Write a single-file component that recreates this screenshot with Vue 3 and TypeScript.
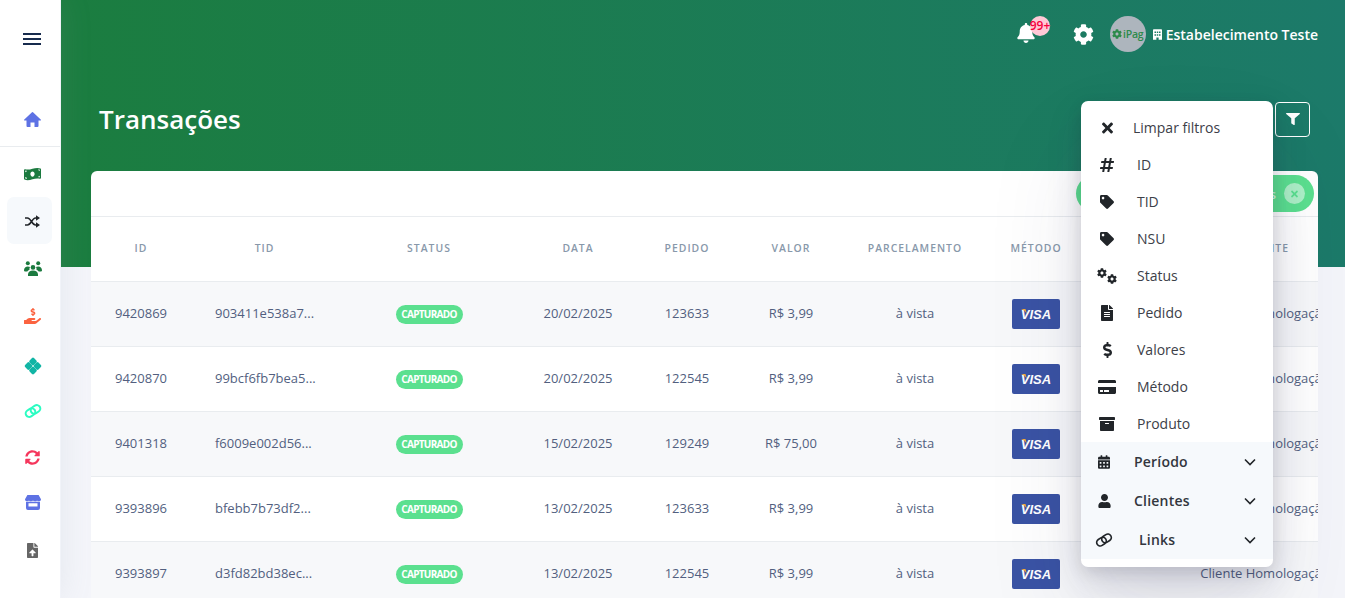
<script setup lang="ts">
type Row = { id: string; tid: string; date: string; order: string; value: string }
type MenuItem = { label: string; icon: string; box: string; width: number }

const icons = {
  money: 'M621.16 54.46C582.37 38.19 543.55 32 504.75 32c-123.17-.01-246.33 62.34-369.5 62.34-30.89 0-61.76-3.92-92.65-13.72-3.47-1.1-6.95-1.62-10.35-1.62C15.04 79 0 92.32 0 110.81v317.26c0 12.63 7.23 24.6 18.84 29.46C57.63 473.81 96.45 480 135.25 480c123.17 0 246.34-62.35 369.51-62.35 30.89 0 61.76 3.92 92.65 13.72 3.47 1.1 6.95 1.62 10.35 1.62 17.21 0 32.25-13.32 32.25-31.81V83.93c-.01-12.64-7.24-24.6-18.85-29.47zM48 132.22c20.12 5.04 41.12 7.57 62.72 8.93C104.84 170.54 79 192.69 48 192.69v-60.47zm0 285.2v-47.78c34.37 0 62.18 27.27 63.71 61.4-22.53-1.81-43.59-6.31-63.71-13.62zM320 352c-44.19 0-80-42.99-80-96 0-53.02 35.82-96 80-96s80 42.98 80 96c0 53.03-35.83 96-80 96zm272 27.78c-17.52-4.39-35.71-6.85-54.32-8.44 5.87-26.08 27.5-45.88 54.32-49.28v57.72zm0-236.11c-30.89-3.91-54.86-29.7-55.81-61.55 19.54 2.17 38.09 6.23 55.81 12.66v48.89z',
  hand: 'M271.06,144.3l54.27,14.3a8.59,8.59,0,0,1,6.63,8.1c0,4.6-4.09,8.4-9.12,8.4h-35.6a30,30,0,0,1-11.19-2.2c-5.24-2.2-11.28-1.7-15.3,2l-19,17.5a11.68,11.68,0,0,0-2.25,2.66,11.42,11.42,0,0,0,3.88,15.74,83.77,83.77,0,0,0,34.51,11.5V240c0,8.8,7.83,16,17.37,16h17.37c9.55,0,17.38-7.2,17.38-16V222.4c32.93-3.6,57.84-31,53.5-63-3.15-23-22.46-41.3-46.56-47.7L282.68,97.4a8.59,8.59,0,0,1-6.63-8.1c0-4.6,4.09-8.4,9.12-8.4h35.6A30,30,0,0,1,332,83.1c5.23,2.2,11.28,1.7,15.3-2l19-17.5A11.31,11.31,0,0,0,368.47,61a11.43,11.43,0,0,0-3.84-15.78,83.82,83.82,0,0,0-34.52-11.5V16c0-8.8-7.82-16-17.37-16H295.37C285.82,0,278,7.2,278,16V33.6c-32.89,3.6-57.85,31-53.51,63C227.63,119.6,247,137.9,271.06,144.3ZM565.27,328.1c-11.8-10.7-30.2-10-42.6,0L430.27,402a63.64,63.64,0,0,1-40,14H272a16,16,0,0,1,0-32h78.29c15.9,0,30.71-10.9,33.25-26.6a31.2,31.2,0,0,0,.46-5.46A32,32,0,0,0,352,320H192a117.66,117.66,0,0,0-74.1,26.29L71.4,384H16A16,16,0,0,0,0,400v96a16,16,0,0,0,16,16H372.77a64,64,0,0,0,40-14L564,377a32,32,0,0,0,1.28-48.9Z',
  sync: 'M370.72 133.28C339.458 104.008 298.888 87.962 255.848 88c-77.458.068-144.328 53.178-162.791 126.85-1.344 5.363-6.122 9.15-11.651 9.15H24.103c-7.498 0-13.194-6.807-11.807-14.176C33.933 94.924 134.813 8 256 8c66.448 0 126.791 26.136 171.315 68.685L463.03 40.97C478.149 25.851 504 36.559 504 57.941V192c0 13.255-10.745 24-24 24H345.941c-21.382 0-32.09-25.851-16.971-40.971l41.75-41.749zM32 296h134.059c21.382 0 32.09 25.851 16.971 40.971l-41.75 41.75c31.262 29.273 71.835 45.319 114.876 45.28 77.418-.07 144.315-53.144 162.787-126.849 1.344-5.363 6.122-9.15 11.651-9.15h57.304c7.498 0 13.194 6.807 11.807 14.176C478.067 417.076 377.187 504 256 504c-66.448 0-126.791-26.136-171.315-68.685L48.97 471.03C33.851 486.149 8 475.441 8 454.059V320c0-13.255 10.745-24 24-24z',
  upload: 'M224 136V0H24C10.7 0 0 10.7 0 24v464c0 13.3 10.7 24 24 24h336c13.3 0 24-10.7 24-24V160H248c-13.2 0-24-10.8-24-24zm65.18 216.01H224v80c0 8.84-7.16 16-16 16h-32c-8.84 0-16-7.16-16-16v-80H94.82c-14.28 0-21.41-17.29-11.27-27.36l96.42-95.7c6.65-6.61 17.39-6.61 24.04 0l96.42 95.7c10.15 10.07 3.03 27.36-11.25 27.36zM377 105L279.1 7c-4.5-4.5-10.6-7-17-7H256v128h128v-6.1c0-6.3-2.5-12.4-7-16.9z',
  bell: 'M224 512c35.32 0 63.97-28.65 63.97-64H160.03c0 35.35 28.65 64 63.97 64zm215.39-149.71c-19.32-20.76-55.47-51.99-55.47-154.29 0-77.7-54.48-139.9-127.94-155.16V32c0-17.67-14.32-32-31.98-32s-31.98 14.33-31.98 32v20.84C118.56 68.1 64.08 130.3 64.08 208c0 102.3-36.15 133.53-55.47 154.29-6 6.45-8.66 14.16-8.61 21.71.11 16.4 12.98 32 32.1 32h383.8c19.12 0 32-15.6 32.1-32 .05-7.55-2.61-15.27-8.61-21.71z',
  cog: 'M487.4 315.7l-42.6-24.6c4.3-23.2 4.3-47 0-70.2l42.6-24.6c4.9-2.8 7.1-8.6 5.5-14-11.1-35.6-30-67.8-54.7-94.6-3.8-4.1-10-5.1-14.8-2.3L380.8 110c-17.9-15.4-38.5-27.3-60.8-35.1V25.8c0-5.6-3.9-10.5-9.4-11.7-36.7-8.2-74.3-7.8-109.2 0-5.5 1.2-9.4 6.1-9.4 11.7V75c-22.2 7.9-42.8 19.8-60.8 35.1L88.7 85.5c-4.9-2.8-11-1.9-14.8 2.3-24.7 26.7-43.6 58.9-54.7 94.6-1.7 5.4.6 11.2 5.5 14L67.3 221c-4.3 23.2-4.3 47 0 70.2l-42.6 24.6c-4.9 2.8-7.1 8.6-5.5 14 11.1 35.6 30 67.8 54.7 94.6 3.8 4.1 10 5.1 14.8 2.3l42.6-24.6c17.9 15.4 38.5 27.3 60.8 35.1v49.2c0 5.6 3.9 10.5 9.4 11.7 36.7 8.2 74.3 7.8 109.2 0 5.5-1.2 9.4-6.1 9.4-11.7v-49.2c22.2-7.9 42.8-19.8 60.8-35.1l42.6 24.6c4.9 2.8 11 1.9 14.8-2.3 24.7-26.7 43.6-58.9 54.7-94.6 1.5-5.5-.7-11.3-5.6-14.1zM256 336c-44.1 0-80-35.9-80-80s35.9-80 80-80 80 35.9 80 80-35.9 80-80 80z',
  filter: 'M487.976 0H24.028C2.71 0-8.047 25.866 7.058 40.971L192 225.941V432c0 7.831 3.821 15.17 10.237 19.662l80 55.98C298.02 518.69 320 507.493 320 487.98V225.941l184.947-184.97C520.021 25.896 509.338 0 487.976 0z',
  times: 'M242.72 256l100.07-100.07c12.28-12.28 12.28-32.19 0-44.48l-22.24-22.24c-12.28-12.28-32.19-12.28-44.48 0L176 189.28 75.93 89.21c-12.28-12.28-32.19-12.28-44.48 0L9.21 111.45c-12.28 12.28-12.28 32.19 0 44.48L109.28 256 9.21 356.07c-12.28 12.28-12.28 32.19 0 44.48l22.24 22.24c12.28 12.28 32.2 12.28 44.48 0L176 322.72l100.07 100.07c12.28 12.28 32.2 12.28 44.48 0l22.24-22.24c12.28-12.28 12.28-32.19 0-44.48L242.72 256z',
  hashtag: 'M440.667 182.109l7.143-40c1.313-7.355-4.342-14.109-11.813-14.109h-74.81l14.623-81.891C377.123 38.754 371.468 32 363.997 32h-40.632a12 12 0 0 0-11.813 9.891L296.175 128H197.54l14.623-81.891C213.477 38.754 207.822 32 200.35 32h-40.632a12 12 0 0 0-11.813 9.891L132.528 128H53.432a12 12 0 0 0-11.813 9.891l-7.143 40C33.163 185.246 38.818 192 46.289 192h74.81L98.242 320H19.146a12 12 0 0 0-11.813 9.891l-7.143 40C-1.123 377.246 4.532 384 12.003 384h74.81L72.19 465.891C70.877 473.246 76.532 480 84.003 480h40.632a12 12 0 0 0 11.813-9.891L151.826 384h98.634l-14.623 81.891C234.523 473.246 240.178 480 247.65 480h40.632a12 12 0 0 0 11.813-9.891L315.472 384h79.096a12 12 0 0 0 11.813-9.891l7.143-40c1.313-7.355-4.342-14.109-11.813-14.109h-74.81l22.857-128h79.096a12 12 0 0 0 11.813-9.891zM261.889 320h-98.634l22.857-128h98.634l-22.857 128z',
  tag: 'M0 252.118V48C0 21.49 21.49 0 48 0h204.118a48 48 0 0 1 33.941 14.059l211.882 211.882c18.745 18.745 18.745 49.137 0 67.882L293.823 497.941c-18.745 18.745-49.137 18.745-67.882 0L14.059 286.059A48 48 0 0 1 0 252.118zM112 64c-26.51 0-48 21.49-48 48s21.49 48 48 48 48-21.49 48-48-21.49-48-48-48z',
  file: 'M224 136V0H24C10.7 0 0 10.7 0 24v464c0 13.3 10.7 24 24 24h336c13.3 0 24-10.7 24-24V160H248c-13.2 0-24-10.8-24-24zm64 236c0 6.6-5.4 12-12 12H108c-6.6 0-12-5.4-12-12v-8c0-6.6 5.4-12 12-12h168c6.6 0 12 5.4 12 12v8zm0-64c0 6.6-5.4 12-12 12H108c-6.6 0-12-5.4-12-12v-8c0-6.6 5.4-12 12-12h168c6.6 0 12 5.4 12 12v8zm0-72v8c0 6.6-5.4 12-12 12H108c-6.6 0-12-5.4-12-12v-8c0-6.6 5.4-12 12-12h168c6.6 0 12 5.4 12 12zm96-114.1v6.1H256V0h6.1c6.4 0 12.5 2.5 17 7l97.9 98c4.5 4.5 7 10.6 7 16.9z',
  dollar: 'M209.2 233.4l-108-31.6C88.7 198.2 80 186.5 80 173.5c0-16.3 13.2-29.5 29.5-29.5h66.3c12.2 0 24.2 3.7 34.2 10.5 6.1 4.1 14.3 3.1 19.5-2l34.8-34c7.1-6.9 6.1-18.4-1.8-24.5C238 74.8 207.4 64.1 176 64V16c0-8.8-7.2-16-16-16h-32c-8.8 0-16 7.2-16 16v48h-2.5C45.8 64-5.4 118.7.5 183.6c4.2 46.1 39.4 83.6 83.8 96.6l102.5 30c12.5 3.7 21.2 15.3 21.2 28.3 0 16.3-13.2 29.5-29.5 29.5h-66.3C100 368 88 364.3 78 357.5c-6.1-4.1-14.3-3.1-19.5 2l-34.8 34c-7.1 6.9-6.1 18.4 1.8 24.5 24.5 19.2 55.1 29.9 86.5 30v48c0 8.8 7.2 16 16 16h32c8.8 0 16-7.2 16-16v-48.2c46.6-.9 90.3-28.6 105.7-72.7 21.5-61.6-14.6-124.8-72.5-141.7z',
  card: 'M0 432c0 26.5 21.5 48 48 48h480c26.5 0 48-21.5 48-48V256H0v176zm192-68c0-6.6 5.4-12 12-12h136c6.6 0 12 5.4 12 12v40c0 6.6-5.4 12-12 12H204c-6.6 0-12-5.4-12-12v-40zm-128 0c0-6.6 5.4-12 12-12h72c6.6 0 12 5.4 12 12v40c0 6.6-5.4 12-12 12H76c-6.6 0-12-5.4-12-12v-40zM576 80v48H0V80c0-26.5 21.5-48 48-48h480c26.5 0 48 21.5 48 48z',
  archive: 'M32 448c0 17.7 14.3 32 32 32h384c17.7 0 32-14.3 32-32V160H32v288zm160-212c0-6.6 5.4-12 12-12h104c6.6 0 12 5.4 12 12v8c0 6.6-5.4 12-12 12H204c-6.6 0-12-5.4-12-12v-8zM480 32H32C14.3 32 0 46.3 0 64v48c0 8.8 7.2 16 16 16h480c8.8 0 16-7.2 16-16V64c0-17.7-14.3-32-32-32z',
  calendar: 'M0 464c0 26.5 21.5 48 48 48h352c26.5 0 48-21.5 48-48V192H0v272zm320-196c0-6.6 5.4-12 12-12h40c6.6 0 12 5.4 12 12v40c0 6.6-5.4 12-12 12h-40c-6.6 0-12-5.4-12-12v-40zm0 128c0-6.6 5.4-12 12-12h40c6.6 0 12 5.4 12 12v40c0 6.6-5.4 12-12 12h-40c-6.6 0-12-5.4-12-12v-40zM192 268c0-6.6 5.4-12 12-12h40c6.6 0 12 5.4 12 12v40c0 6.6-5.4 12-12 12h-40c-6.6 0-12-5.4-12-12v-40zm0 128c0-6.6 5.4-12 12-12h40c6.6 0 12 5.4 12 12v40c0 6.6-5.4 12-12 12h-40c-6.6 0-12-5.4-12-12v-40zM64 268c0-6.6 5.4-12 12-12h40c6.6 0 12 5.4 12 12v40c0 6.6-5.4 12-12 12H76c-6.6 0-12-5.4-12-12v-40zm0 128c0-6.6 5.4-12 12-12h40c6.6 0 12 5.4 12 12v40c0 6.6-5.4 12-12 12H76c-6.6 0-12-5.4-12-12v-40zM400 64h-48V16c0-8.8-7.2-16-16-16h-32c-8.8 0-16 7.2-16 16v48H160V16c0-8.8-7.2-16-16-16h-32c-8.8 0-16 7.2-16 16v48H48C21.5 64 0 85.5 0 112v48h448v-48c0-26.5-21.5-48-48-48z',
  user: 'M224 256c70.7 0 128-57.3 128-128S294.7 0 224 0 96 57.3 96 128s57.3 128 128 128zm89.6 32h-16.7c-22.2 10.2-46.9 16-72.9 16s-50.6-5.8-72.9-16h-16.7C60.2 288 0 348.2 0 422.4V464c0 26.5 21.5 48 48 48h352c26.5 0 48-21.5 48-48v-41.6c0-74.2-60.2-134.4-134.4-134.4z',
}

// nudge: how many px an icon sits below the centre of its slot
const navLinks = [
  { kind: 'path', icon: icons.money, box: '0 0 640 512', color: '#1b7a3f', w: 17, h: 14, nudge: 0, active: false },
  { kind: 'random', color: '#212529', nudge: 1, active: true },
  { kind: 'users', color: '#1b7a3f', nudge: 1, active: false },
  { kind: 'path', icon: icons.hand, box: '0 0 576 512', color: '#fb6340', w: 17, h: 16, nudge: 1.5, active: false },
  { kind: 'diamond', color: '#11b5a5', nudge: 4.5, active: false },
  { kind: 'link', color: '#2bfcc2', nudge: 2.5, active: false },
  { kind: 'path', icon: icons.sync, box: '0 0 512 512', color: '#f5365c', w: 15, h: 15, nudge: 2, active: false },
  { kind: 'store', color: '#5e72e4', nudge: 0, active: false },
  { kind: 'path', icon: icons.upload, box: '0 0 384 512', color: '#666', w: 11, h: 15, nudge: 1, active: false },
]

const columns = ['ID', 'TID', 'Status', 'Data', 'Pedido', 'Valor', 'Parcelamento', 'Método', 'Produto', 'Cliente']

const rows: Row[] = [
  { id: '9420869', tid: '903411e538a7...', date: '20/02/2025', order: '123633', value: 'R$ 3,99' },
  { id: '9420870', tid: '99bcf6fb7bea5...', date: '20/02/2025', order: '122545', value: 'R$ 3,99' },
  { id: '9401318', tid: 'f6009e002d56...', date: '15/02/2025', order: '129249', value: 'R$ 75,00' },
  { id: '9393896', tid: 'bfebb7b73df2...', date: '13/02/2025', order: '123633', value: 'R$ 3,99' },
  { id: '9393897', tid: 'd3fd82bd38ec...', date: '13/02/2025', order: '122545', value: 'R$ 3,99' },
]

const filters: MenuItem[] = [
  { label: 'ID', icon: icons.hashtag, box: '0 0 448 512', width: 14 },
  { label: 'TID', icon: icons.tag, box: '0 0 512 512', width: 14 },
  { label: 'NSU', icon: icons.tag, box: '0 0 512 512', width: 14 },
  { label: 'Status', icon: 'cogs', box: '0 0 640 512', width: 20 },
  { label: 'Pedido', icon: icons.file, box: '0 0 384 512', width: 12 },
  { label: 'Valores', icon: icons.dollar, box: '0 0 288 512', width: 9 },
  { label: 'Método', icon: icons.card, box: '0 0 576 512', width: 18 },
  { label: 'Produto', icon: icons.archive, box: '0 0 512 512', width: 16 },
]
</script>

<template>
  <div class="layout">
    <aside class="sidebar">
      <button class="burger" aria-label="Menu"><span></span><span></span><span></span></button>
      <a class="nav-home">
        <svg viewBox="0 0 17 15" width="17" height="15" fill="#5e72e4">
          <path d="M8 .3a.8.8 0 0 1 1 0l7.7 7.2a.6.6 0 0 1-.4 1.1H14.5V14a1 1 0 0 1-1 1h-3V10.5h-4V15h-3a1 1 0 0 1-1-1V8.600H.7a.6.6 0 0 1-.4-1.1z" />
        </svg>
      </a>
      <nav class="nav-list">
        <a v-for="(link, i) in navLinks" :key="i" class="nav-link" :class="{ active: link.active }">
          <span class="nav-icon" :style="{ marginTop: link.nudge * 2 + 'px' }">
            <svg v-if="link.kind === 'path'" :viewBox="link.box" :width="link.w" :height="link.h" :fill="link.color" preserveAspectRatio="none"><path :d="link.icon" /></svg>
            <svg v-else-if="link.kind === 'random'" viewBox="0 0 15 13" width="15" height="13">
              <path d="M0 3h2.5c3.500 0 4.500 7 8 7H12M0 10h2.500c3.500 0 4.500-7 8-7H12" fill="none" :stroke="link.color" stroke-width="1.5" />
              <path d="M11 .2L15 3l-4 2.8zM11 7.2L15 10l-4 2.8z" :fill="link.color" />
            </svg>
            <svg v-else-if="link.kind === 'users'" viewBox="0 0 18 15" width="18" height="15" :fill="link.color">
              <circle cx="3.8" cy="2.3" r="2" />
              <circle cx="14.2" cy="2.3" r="2" />
              <circle cx="9" cy="6.4" r="2.3" />
              <path d="M0 9.3c0-2.300 1.700-3.800 3.800-3.800.9 0 1.600.2 2.200.6-.5.8-.7 1.700-.5 2.700-1 .4-1.700 1-2.200 1.700H.8C.3 10.500 0 10 0 9.300zM18 9.300c0-2.300-1.700-3.800-3.800-3.800-.9 0-1.600.2-2.200.6.5.8.7 1.700.5 2.700 1 .4 1.700 1 2.200 1.700h2.500c.5 0 .8-.5.8-1.200zM4 15v-1.500c0-2.300 2.200-3.900 5-3.900s5 1.600 5 3.900V15z" />
            </svg>
            <svg v-else-if="link.kind === 'diamond'" viewBox="0 0 18 18" width="18" height="18" :fill="link.color">
              <rect x="5.9" y="1.4" width="6.2" height="6.2" rx="1.4" transform="rotate(45 9 4.5)" />
              <rect x="5.9" y="10.4" width="6.2" height="6.2" rx="1.4" transform="rotate(45 9 13.5)" />
              <rect x="1.4" y="5.9" width="6.2" height="6.2" rx="1.4" transform="rotate(45 4.5 9)" />
              <rect x="10.4" y="5.9" width="6.2" height="6.2" rx="1.4" transform="rotate(45 13.5 9)" />
            </svg>
            <svg v-else-if="link.kind === 'link'" viewBox="0 0 18 14" width="18" height="14" fill="none" :stroke="link.color" stroke-width="2">
              <g transform="rotate(-33 9 7)">
                <rect x="1" y="3.5" width="10" height="7" rx="3.5" />
                <rect x="7" y="3.5" width="10" height="7" rx="3.5" />
              </g>
            </svg>
            <svg v-else viewBox="0 0 16 15" width="16" height="15" :fill="link.color">
              <path d="M2.4 0h11.2L16 4.3C16 5.6 15 6.5 13.9 6.5c-.8 0-1.500-.4-1.900-1-.4.6-1.200 1-2 1s-1.500-.4-2-1c-.5.6-1.200 1-2 1s-1.600-.4-2-1c-.4.6-1.100 1-1.900 1C1 6.500 0 5.600 0 4.300z" />
              <path fill-rule="evenodd" d="M1 6.800c.9.400 2 .3 3-.3 1.200.8 2.800.8 4 0 1.200.8 2.800.8 4 0 1 .6 2.100.7 3 .3V13a2 2 0 0 1-2 2H3a2 2 0 0 1-2-2zM3.500 8.200v3.300h9V8.200z" />
            </svg>
          </span>
        </a>
      </nav>
    </aside>

    <main class="main">
      <header class="hero">
        <div class="topbar">
          <span class="bell">
            <svg viewBox="0 0 448 512" width="18" height="20" fill="#fff"><path :d="icons.bell" /></svg>
            <b class="bell-count">99+</b>
          </span>
          <svg class="gear" viewBox="0 0 512 512" width="21" height="21" fill="#fff"><path :d="icons.cog" /></svg>
          <span class="avatar">
            <svg viewBox="0 0 512 512" width="10" height="10" fill="#2c8a4b"><path :d="icons.cog" /></svg>
            <span>iPag</span>
          </span>
          <span class="merchant">
            <svg viewBox="0 0 12 14" width="9" height="11" fill="#fff">
              <path fill-rule="evenodd" d="M1 0h10a1 1 0 0 1 1 1v13H7.500v-3h-3v3H0V1a1 1 0 0 1 1-1zM2 3v2h2V3zm3 0v2h2V3zm3 0v2h2V3zM2 6.500v2h2v-2zm3 0v2h2v-2zm3 0v2h2v-2z" />
            </svg>
            Estabelecimento Teste
          </span>
        </div>
        <div class="title-row">
          <h1>Transações</h1>
          <button class="filter-btn" aria-label="Filtrar">
            <svg viewBox="0 0 512 512" width="14" height="12" fill="#fff" preserveAspectRatio="none"><path :d="icons.filter" /></svg>
          </button>
        </div>
      </header>

      <section class="content">
        <div class="card">
          <div class="card-head">
            <span class="chip">
              <span class="chip-text">Transações</span>
              <span class="chip-close">
                <svg viewBox="0 0 352 512" width="7" height="10" fill="#5be08f"><path :d="icons.times" /></svg>
              </span>
            </span>
          </div>
          <div class="table-wrap">
            <table>
              <thead>
                <tr><th v-for="col in columns" :key="col">{{ col }}</th></tr>
              </thead>
              <tbody>
                <tr v-for="row in rows" :key="row.id">
                  <td><span class="cell">{{ row.id }}</span></td>
                  <td class="tid"><span class="cell">{{ row.tid }}</span></td>
                  <td><span class="badge">CAPTURADO</span></td>
                  <td><span class="cell">{{ row.date }}</span></td>
                  <td><span class="cell">{{ row.order }}</span></td>
                  <td><span class="cell">{{ row.value }}</span></td>
                  <td><span class="cell">à vista</span></td>
                  <td>
                    <span class="visa">
                      <svg class="visa-tip" viewBox="0 0 6 5" width="6" height="5"><path d="M0 0h4.500l1.500 5C4.500 2.500 2.500 .8 0 0z" fill="#f2a93b" /></svg>
                      <span>VISA</span>
                    </span>
                  </td>
                  <td></td>
                  <td><span class="cell">Cliente Homologação</span></td>
                </tr>
              </tbody>
            </table>
          </div>
        </div>
      </section>

      <div class="menu">
        <a class="menu-item">
          <span class="menu-icon"><svg viewBox="0 0 352 512" width="11" height="16" fill="#212529"><path :d="icons.times" /></svg></span>
          <span>Limpar filtros</span>
        </a>
        <a v-for="item in filters" :key="item.label" class="menu-item">
          <span class="menu-icon">
            <svg v-if="item.icon === 'cogs'" viewBox="0 0 640 512" width="20" height="16" fill="#212529">
              <path :d="icons.cog" transform="scale(.62)" />
              <path :d="icons.cog" transform="translate(322 195) scale(.62)" />
            </svg>
            <svg v-else :viewBox="item.box" :width="item.width" height="16" fill="#212529"><path :d="item.icon" /></svg>
          </span>
          <span class="menu-label">{{ item.label }}</span>
        </a>
        <div class="menu-sections">
          <a class="menu-section">
            <span class="section-icon"><svg viewBox="0 0 448 512" width="12" height="14" fill="#212529"><path :d="icons.calendar" /></svg></span>
            <span class="section-label">Período</span>
            <svg class="chevron" viewBox="0 0 12 8" width="12" height="8" fill="none" stroke="#212529" stroke-width="1.6"><path d="M1 1.500l5 5 5-5" /></svg>
          </a>
          <a class="menu-section">
            <span class="section-icon"><svg viewBox="0 0 448 512" width="13" height="14" fill="#212529"><path :d="icons.user" /></svg></span>
            <span class="section-label">Clientes</span>
            <svg class="chevron" viewBox="0 0 12 8" width="12" height="8" fill="none" stroke="#212529" stroke-width="1.6"><path d="M1 1.500l5 5 5-5" /></svg>
          </a>
          <a class="menu-section">
            <span class="section-icon">
              <svg viewBox="0 0 18 14" width="18" height="14" fill="none" stroke="#212529" stroke-width="1.7">
                <g transform="rotate(-33 9 7)">
                  <rect x="1" y="3.5" width="10" height="7" rx="3.5" />
                  <rect x="7" y="3.5" width="10" height="7" rx="3.5" />
                </g>
              </svg>
            </span>
            <span class="section-label links">Links</span>
            <svg class="chevron" viewBox="0 0 12 8" width="12" height="8" fill="none" stroke="#212529" stroke-width="1.6"><path d="M1 1.500l5 5 5-5" /></svg>
          </a>
        </div>
      </div>
    </main>
  </div>
</template>

<style>
html,
body {
  margin: 0;
  height: 100%;
  overflow: hidden;
}
</style>

<style scoped>
.layout {
  display: flex;
  height: 598px;
  overflow: hidden;
  font-family: "Open Sans", sans-serif;
  background: #f4f5fa;
}

.sidebar {
  flex: 0 0 60px;
  display: flex;
  flex-direction: column;
  background: #fff;
  border-right: 1px solid #f1f3f9;
  box-shadow: 0 0 32px rgba(136, 152, 170, 0.15);
  position: relative;
  z-index: 2;
}

.burger {
  display: flex;
  flex-direction: column;
  gap: 3px;
  width: 18px;
  margin: 33px 0 0 23px;
  padding: 0;
  border: 0;
  background: none;
}

.burger span {
  display: block;
  height: 2px;
  background: #172b4d;
}

.nav-home {
  display: flex;
  justify-content: center;
  align-items: center;
  height: 53px;
  margin: 48px 0 0 5px;
}

.nav-list {
  display: flex;
  flex-direction: column;
  padding-top: 3px;
  border-top: 1px solid #e9ecef;
}

.nav-link {
  display: flex;
  align-items: center;
  justify-content: center;
  height: 47px;
  margin: 0 8px 0 7px;
  padding-left: 6px;
  border-radius: 7px;
}

.nav-link.active {
  background: #f6f9fc;
}

.nav-icon {
  display: flex;
}

.main {
  flex: 1;
  min-width: 0;
  position: relative;
}

.hero {
  height: 267px;
  background: linear-gradient(87deg, #1b7d3f 0, #1c7a6a 100%);
}

.topbar {
  display: flex;
  align-items: center;
  justify-content: flex-end;
  height: 68px;
  padding-right: 27px;
  color: #fff;
}

.bell {
  position: relative;
  display: flex;
  margin: 0 38px 2px 0;
}

.bell-count {
  position: absolute;
  left: 13px;
  top: -7px;
  width: 20px;
  height: 20px;
  border-radius: 50%;
  background: #ffc9d6;
  color: #f5003d;
  font-size: 12px;
  font-weight: 600;
  line-height: 20px;
  text-align: center;
  white-space: nowrap;
}

.gear {
  margin-right: 16px;
}

.avatar {
  display: flex;
  align-items: center;
  justify-content: center;
  gap: 1px;
  width: 36px;
  height: 36px;
  margin-right: 7px;
  border-radius: 50%;
  background: #adb5bd;
  color: #2c8a4b;
  font-size: 10.5px;
  font-weight: 600;
  letter-spacing: -0.2px;
}

.merchant {
  display: flex;
  align-items: center;
  gap: 4px;
  font-size: 14px;
  font-weight: 600;
}

.title-row {
  display: flex;
  align-items: center;
  justify-content: space-between;
  padding: 33px 35px 0 38px;
}

h1 {
  margin: 0;
  color: #fff;
  font-size: 26px;
  font-weight: 600;
  line-height: 36px;
}

.filter-btn {
  display: flex;
  align-items: center;
  justify-content: center;
  width: 35px;
  height: 35px;
  padding: 0;
  border: 1px solid #fff;
  border-radius: 4px;
  background: transparent;
}

.content {
  margin-top: -96px;
  padding: 0 27px 0 30px;
}

.card {
  overflow: hidden;
  border-radius: 6px 6px 0 0;
  background: #fff;
}

.card-head {
  display: flex;
  justify-content: flex-end;
  height: 45px;
  box-sizing: border-box;
  padding: 4px 4px 0 0;
}

.chip {
  display: flex;
  align-items: center;
  justify-content: flex-end;
  gap: 8px;
  width: 238px;
  height: 37px;
  box-sizing: border-box;
  padding-right: 9px;
  border-radius: 19px;
  background: #5be08f;
  color: rgba(255, 255, 255, 0.7);
  font-size: 13px;
  font-weight: 600;
}

.chip-close {
  display: flex;
  align-items: center;
  justify-content: center;
  width: 21px;
  height: 21px;
  border-radius: 50%;
  background: rgba(255, 255, 255, 0.5);
}

.table-wrap {
  overflow: hidden;
}

table {
  table-layout: fixed;
  width: 1247px;
  border-collapse: collapse;
}

th,
td {
  padding: 0;
  text-align: center;
  white-space: nowrap;
}

th {
  height: 65px;
  padding-bottom: 2px;
  box-sizing: border-box;
  border-top: 1px solid #e9ecef;
  border-bottom: 1px solid #e9ecef;
  color: #8898aa;
  font-size: 10.4px;
  font-weight: 600;
  letter-spacing: 1px;
  text-transform: uppercase;
}

th:nth-child(1) { width: 100px; }
th:nth-child(2) { width: 147px; }
th:nth-child(3) { width: 182px; }
th:nth-child(4) { width: 116px; }
th:nth-child(5) { width: 102px; }
th:nth-child(6) { width: 106px; }
th:nth-child(7) { width: 142px; }
th:nth-child(8) { width: 100px; }
th:nth-child(9) { width: 106px; }
th:nth-child(10) { width: 146px; }

td {
  height: 64px;
  border-bottom: 1px solid #e9ecef;
  color: #525f7f;
  font-size: 13px;
}

td.tid {
  padding-left: 24px;
  text-align: left;
}

.cell {
  display: block;
  margin-top: -2px;
}

tbody tr:nth-child(odd) {
  background: #f7f8fa;
}

.badge {
  display: inline-block;
  width: 67px;
  height: 19px;
  border-radius: 10px;
  background: #5be08f;
  color: #fff;
  font-size: 10px;
  font-weight: 700;
  letter-spacing: -0.7px;
  line-height: 19px;
  vertical-align: middle;
}

.visa {
  position: relative;
  display: inline-flex;
  align-items: center;
  justify-content: center;
  width: 48px;
  height: 30px;
  border-radius: 2px;
  background: #3a53a4;
  color: #fff;
  font-family: "Liberation Sans", sans-serif;
  font-size: 13px;
  font-style: italic;
  font-weight: 700;
  vertical-align: middle;
}

.visa-tip {
  position: absolute;
  left: 9px;
  top: 10px;
}

.menu {
  position: absolute;
  top: 101px;
  right: 72px;
  width: 192px;
  padding: 8px 0;
  box-sizing: border-box;
  border-radius: 7px;
  background: #fff;
  box-shadow: 0 50px 100px rgba(50, 50, 93, 0.1), 0 15px 35px rgba(50, 50, 93, 0.15), 0 5px 15px rgba(0, 0, 0, 0.1);
  color: #3c4048;
  font-size: 14px;
  z-index: 3;
}

.menu-item {
  display: flex;
  align-items: center;
  height: 37px;
}

.menu-icon {
  display: flex;
  align-items: center;
  justify-content: center;
  flex: 0 0 52px;
}

.menu-label {
  margin-left: 4px;
}

.menu-sections {
  background: #f6f9fc;
}

.menu-section {
  display: flex;
  align-items: center;
  height: 39px;
  color: #32363e;
  font-weight: 600;
  letter-spacing: 0.2px;
}

.section-icon {
  display: flex;
  justify-content: center;
  flex: 0 0 46px;
}

.section-label {
  flex: 1;
  margin-left: 7px;
}

.section-label.links {
  margin-left: 12px;
}

.chevron {
  margin-right: 17px;
}
</style>
